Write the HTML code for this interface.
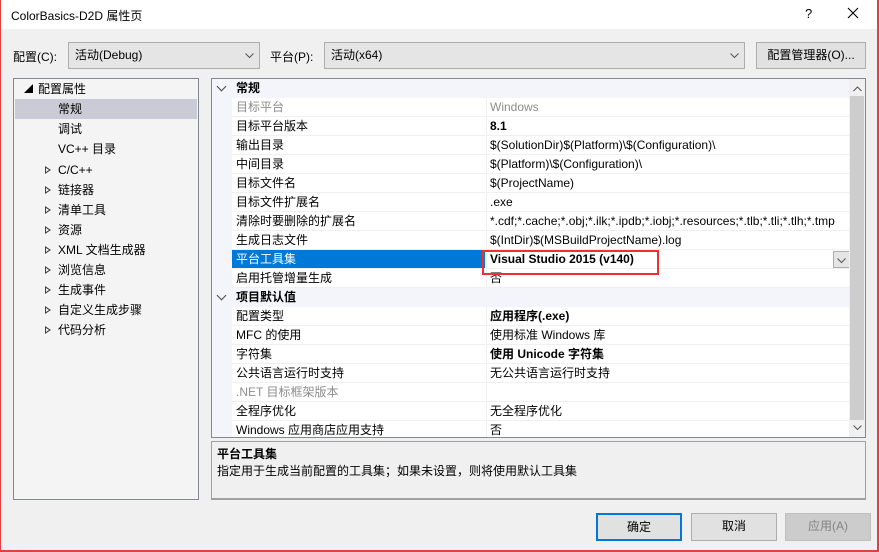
<!DOCTYPE html>
<html><head><meta charset="utf-8"><style>
*{margin:0;padding:0;box-sizing:border-box}
body{width:879px;height:552px;background:#f0f0f0;font-family:"Liberation Sans","Noto Sans CJK SC",sans-serif;font-size:12px;color:#000;position:relative;overflow:hidden}
.a{position:absolute;white-space:nowrap}
.title{left:0;top:0;width:879px;height:29px;background:#fff}
.combo{background:#e5e5e5;border:1px solid #adadad;height:27px;line-height:25px;padding-left:6px}
.btn{background:#e1e1e1;border:1px solid #adadad;text-align:center;line-height:25px;height:27px}
.tree{left:13px;top:78px;width:186px;height:422px;background:#f4f4f4;border:1px solid #828790}
.tr{position:absolute;left:0;width:184px;height:20px;line-height:20px}
.tri{position:absolute;left:31px;top:6px;width:0;height:0;border-left:6px solid #444;border-top:4px solid transparent;border-bottom:4px solid transparent}
.tri::after{content:"";position:absolute;left:-5px;top:-2px;border-left:3px solid #f4f4f4;border-top:2px solid transparent;border-bottom:2px solid transparent}
.grid{left:211px;top:78px;width:655px;height:360px;background:#fff;border:1px solid #828790;overflow:hidden}
.row{position:absolute;left:0;width:637px;height:19px;line-height:18px}
.row .n{position:absolute;left:20px;width:253px;height:19px;padding-left:4px;border-bottom:1px solid #f0f0f0}
.row .v{position:absolute;left:274px;width:363px;height:19px;padding-left:3px;border-bottom:1px solid #f0f0f0;border-left:1px solid #f0f0f0;overflow:hidden}
.row .m{position:absolute;left:0;width:20px;height:19px;background:#f3f5fa}
.cat{background:#f3f5fa;font-weight:bold}
.cat span{position:absolute;left:24px}
.chev{position:absolute;left:6px;top:4px;width:7px;height:7px;border-right:1.5px solid #444;border-bottom:1.5px solid #444;transform:rotate(45deg)}
.g{color:#8d8d8d}
.b{font-weight:bold}
svg.dd{position:absolute}
</style></head><body>
<div class="a title"></div>
<div class="a" style="left:0;top:0;width:1px;height:552px;background:#e04040"></div>
<div class="a" style="left:877px;top:0;width:2px;height:552px;background:#e04040"></div>
<div class="a" style="left:0;top:550px;width:879px;height:2px;background:#e04040"></div>
<div class="a" style="left:11px;top:7px;font-size:12px">ColorBasics-D2D 属性页</div>
<div class="a" style="left:805px;top:6px;font-size:13px">?</div>
<svg class="dd" style="left:847px;top:7px" width="12" height="12"><path d="M1 1L11 11M11 1L1 11" stroke="#000" stroke-width="1.1"/></svg>

<div class="a" style="left:13px;top:48px">配置(C):</div>
<div class="a combo" style="left:68px;top:42px;width:192px">活动(Debug)</div>
<svg class="dd" style="left:245px;top:53px" width="9" height="6"><path d="M0.5 0.5L4.5 4.5L8.5 0.5" stroke="#555" fill="none"/></svg>
<div class="a" style="left:270px;top:48px">平台(P):</div>
<div class="a combo" style="left:324px;top:42px;width:421px">活动(x64)</div>
<svg class="dd" style="left:730px;top:53px" width="9" height="6"><path d="M0.5 0.5L4.5 4.5L8.5 0.5" stroke="#555" fill="none"/></svg>
<div class="a btn" style="left:756px;top:42px;width:110px">配置管理器(O)...</div>

<div class="a tree">
<div class="tr" style="top:0"><span style="position:absolute;left:10px;top:0;font-size:9px">◢</span><span style="position:absolute;left:24px">配置属性</span></div>
<div class="tr" style="top:20px;background:#cacbd6;left:1px;width:182px"><span style="position:absolute;left:43px">常规</span></div>
<div class="tr" style="top:40px"><span style="position:absolute;left:44px">调试</span></div>
<div class="tr" style="top:60px"><span style="position:absolute;left:44px">VC++ 目录</span></div>
<div class="tr" style="top:81px"><i class="tri"></i><span style="position:absolute;left:44px">C/C++</span></div>
<div class="tr" style="top:101px"><i class="tri"></i><span style="position:absolute;left:44px">链接器</span></div>
<div class="tr" style="top:121px"><i class="tri"></i><span style="position:absolute;left:44px">清单工具</span></div>
<div class="tr" style="top:141px"><i class="tri"></i><span style="position:absolute;left:44px">资源</span></div>
<div class="tr" style="top:161px"><i class="tri"></i><span style="position:absolute;left:44px">XML 文档生成器</span></div>
<div class="tr" style="top:181px"><i class="tri"></i><span style="position:absolute;left:44px">浏览信息</span></div>
<div class="tr" style="top:201px"><i class="tri"></i><span style="position:absolute;left:44px">生成事件</span></div>
<div class="tr" style="top:221px"><i class="tri"></i><span style="position:absolute;left:44px">自定义生成步骤</span></div>
<div class="tr" style="top:241px"><i class="tri"></i><span style="position:absolute;left:44px">代码分析</span></div>
</div>

<div class="a grid">
<div class="row cat" style="top:0"><i class="chev"></i><span>常规</span></div>
<div class="row" style="top:19px"><i class="m"></i><div class="n g">目标平台</div><div class="v g">Windows</div></div>
<div class="row" style="top:38px"><i class="m"></i><div class="n">目标平台版本</div><div class="v b">8.1</div></div>
<div class="row" style="top:57px"><i class="m"></i><div class="n">输出目录</div><div class="v">$(SolutionDir)$(Platform)\$(Configuration)\</div></div>
<div class="row" style="top:76px"><i class="m"></i><div class="n">中间目录</div><div class="v">$(Platform)\$(Configuration)\</div></div>
<div class="row" style="top:95px"><i class="m"></i><div class="n">目标文件名</div><div class="v">$(ProjectName)</div></div>
<div class="row" style="top:114px"><i class="m"></i><div class="n">目标文件扩展名</div><div class="v">.exe</div></div>
<div class="row" style="top:133px"><i class="m"></i><div class="n">清除时要删除的扩展名</div><div class="v">*.cdf;*.cache;*.obj;*.ilk;*.ipdb;*.iobj;*.resources;*.tlb;*.tli;*.tlh;*.tmp</div></div>
<div class="row" style="top:152px"><i class="m"></i><div class="n">生成日志文件</div><div class="v">$(IntDir)$(MSBuildProjectName).log</div></div>
<div class="row" style="top:171px"><i class="m"></i><div class="n" style="background:#0078d7;color:#fff">平台工具集</div><div class="v b">Visual Studio 2015 (v140)<div style="position:absolute;left:346px;top:1px;width:17px;height:17px;border:1px solid #adadad;background:#e5e5e5"><svg class="dd" style="left:3px;top:6px" width="9" height="6"><path d="M0.5 0.5L4.5 4.5L8.5 0.5" stroke="#555" fill="none"/></svg></div></div></div>
<div class="row" style="top:190px"><i class="m"></i><div class="n">启用托管增量生成</div><div class="v">否</div></div>
<div class="row cat" style="top:209px"><i class="chev"></i><span>项目默认值</span></div>
<div class="row" style="top:228px"><i class="m"></i><div class="n">配置类型</div><div class="v b">应用程序(.exe)</div></div>
<div class="row" style="top:247px"><i class="m"></i><div class="n">MFC 的使用</div><div class="v">使用标准 Windows 库</div></div>
<div class="row" style="top:266px"><i class="m"></i><div class="n">字符集</div><div class="v b">使用 Unicode 字符集</div></div>
<div class="row" style="top:285px"><i class="m"></i><div class="n">公共语言运行时支持</div><div class="v">无公共语言运行时支持</div></div>
<div class="row" style="top:304px"><i class="m"></i><div class="n g">.NET 目标框架版本</div><div class="v"></div></div>
<div class="row" style="top:323px"><i class="m"></i><div class="n">全程序优化</div><div class="v">无全程序优化</div></div>
<div class="row" style="top:342px"><i class="m"></i><div class="n">Windows 应用商店应用支持</div><div class="v">否</div></div>
<div style="position:absolute;left:637px;top:0;width:16px;height:358px;background:#f0f0f0"></div>
<div style="position:absolute;left:638px;top:17px;width:14px;height:324px;background:#cdcdcd"></div>
<svg class="dd" style="left:641px;top:7px" width="9" height="6"><path d="M0.5 5L4.5 1L8.5 5" stroke="#555" fill="none"/></svg>
<svg class="dd" style="left:641px;top:346px" width="9" height="6"><path d="M0.5 0.5L4.5 4.5L8.5 0.5" stroke="#555" fill="none"/></svg>
</div>
<div class="a" style="left:482px;top:250px;width:177px;height:25px;border:2px solid #f03030"></div>

<div class="a" style="left:211px;top:441px;width:655px;height:59px;border:1px solid #a0a0a0;border-bottom:2px solid #a0a0a0"></div>
<div class="a b" style="left:217px;top:445px">平台工具集</div>
<div class="a" style="left:217px;top:462px">指定用于生成当前配置的工具集；如果未设置，则将使用默认工具集</div>

<div class="a btn" style="left:596px;top:513px;width:86px;height:28px;border:2px solid #0078d7;line-height:24px">确定</div>
<div class="a btn" style="left:691px;top:513px;width:86px;height:28px">取消</div>
<div class="a btn" style="left:785px;top:513px;width:86px;height:28px;background:#ccc;border-color:#bfbfbf;color:#838383">应用(A)</div>
</body></html>
